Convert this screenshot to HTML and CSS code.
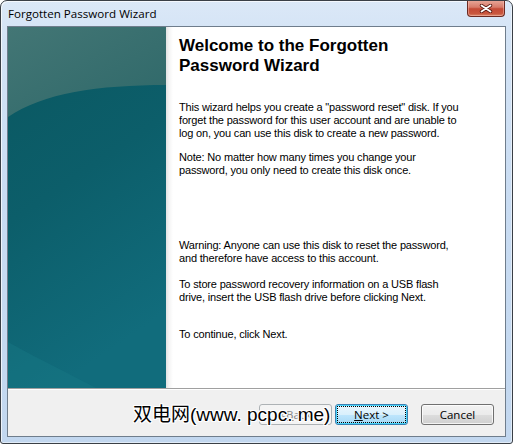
FILE: index.html
```html
<!DOCTYPE html>
<html>
<head>
<meta charset="utf-8">
<link rel="stylesheet" href="styles.css">
</head>
<body>
<div class="window">
  <div class="titlebar">
    <span class="title">Forgotten Password Wizard</span>
    <div class="close">
      <svg width="14" height="9" viewBox="0 0 14 9">
        <path d="M2.5 1.5 L11.5 7.5 M11.5 1.5 L2.5 7.5" stroke="#5a1a12" stroke-width="3.4" stroke-linecap="round"/>
        <path d="M2.5 1.5 L11.5 7.5 M11.5 1.5 L2.5 7.5" stroke="#ffffff" stroke-width="1.8" stroke-linecap="round"/>
      </svg>
    </div>
  </div>
  <div class="client">
    <div class="main">
      <div class="side">
        <svg width="158" height="361" viewBox="0 0 158 361" preserveAspectRatio="none">
          <defs>
            <linearGradient id="low" x1="0" y1="0" x2="0.3" y2="1">
              <stop offset="0" stop-color="#0a5760"/>
              <stop offset="0.5" stop-color="#0c5e6a"/>
              <stop offset="1" stop-color="#116c7c"/>
            </linearGradient>
            <linearGradient id="up" x1="0" y1="0" x2="1" y2="1">
              <stop offset="0" stop-color="#437675"/>
              <stop offset="1" stop-color="#2e6869"/>
            </linearGradient>
          </defs>
          <rect x="0" y="0" width="158" height="361" fill="url(#low)"/>
          <path d="M0 315 C30 332 60 346 88 361 L0 361 Z" fill="#1a7a86" opacity="0.4"/>
          <path d="M0 0 L158 0 L158 58 C90 58 35 66 0 90 Z" fill="url(#up)"/>
        </svg>
      </div>
      <div class="content">
        <h1 class="heading">Welcome to the Forgotten Password Wizard</h1>
        <p class="p1">This wizard helps you create a "password reset" disk. If you forget the password for this user account and are unable to log on, you can use this disk to create a new password.</p>
        <p class="p2">Note: No matter how many times you change your password, you only need to create this disk once.</p>
        <p class="p3">Warning: Anyone can use this disk to reset the password, and therefore have access to this account.</p>
        <p class="p4">To store password recovery information on a USB flash drive, insert the USB flash drive before clicking Next.</p>
        <p class="p5">To continue, click Next.</p>
      </div>
    </div>
    <div class="footer">
      <button class="btn disabled">&lt; <u>B</u>ack</button>
      <button class="btn default"><span class="focus"><u>N</u>ext &gt;</span></button>
      <button class="btn cancel">Cancel</button>
    </div>
  </div>
  <div class="watermark">双电网(www. pcpc. me)</div>
</div>
</body>
</html>
```

FILE: styles.css
```css
html, body {
  margin: 0;
  padding: 0;
  background: #ffffff;
}

.window {
  position: relative;
  box-sizing: border-box;
  width: 513px;
  height: 444px;
  border: 1px solid #3a3f46;
  border-radius: 7px 7px 3px 3px;
  background: linear-gradient(180deg, #dbe8f7 0px, #d3e3f5 40px, #c9dcf2 200px, #c2d7ef 444px);
  padding: 0 6px 6px 6px;
  display: flex;
  flex-direction: column;
  overflow: hidden;
  box-shadow: inset 1px 1px 0 rgba(255,255,255,0.7), inset -1px -1px 0 rgba(255,255,255,0.5);
}

.titlebar {
  height: 25px;
  display: flex;
  align-items: flex-start;
  justify-content: space-between;
  flex: none;
}

.title {
  font-family: "Open Sans", "Noto Sans", sans-serif;
  font-size: 11.6px;
  color: #000000;
  margin-top: 5px;
  margin-left: 1px;
}

.close {
  width: 36px;
  height: 16px;
  margin-top: -1px;
  margin-right: 1px;
  border: 1px solid #6b2a22;
  border-top: none;
  border-radius: 0 0 4px 4px;
  background: linear-gradient(180deg, #e9aa9b 0%, #d77b6a 45%, #c44a36 55%, #c9573e 85%, #d98a6c 100%);
  display: flex;
  align-items: center;
  justify-content: center;
  box-shadow: inset 0 0 0 1px rgba(255,200,190,0.45);
}

.client {
  flex: 1;
  border: 1px solid #6f7d8c;
  background: #f0f0f0;
  display: flex;
  flex-direction: column;
}

.main {
  height: 361px;
  display: flex;
  background: #ffffff;
  border-bottom: 1px solid #a0a0a0;
  flex: none;
}

.side {
  width: 158px;
  height: 361px;
  flex: none;
}

.side svg {
  display: block;
}

.content {
  flex: 1;
  padding: 9px 10px 0 13px;
  background: linear-gradient(90deg, #e2e2e2 0px, #f4f4f4 3px, #ffffff 7px);
  font-family: "Liberation Sans", Arial, sans-serif;
  font-size: 11px;
  line-height: 13px;
  letter-spacing: -0.17px;
  color: #000000;
}

.heading {
  margin: 0;
  font-family: "Liberation Sans", Arial, sans-serif;
  font-weight: bold;
  font-size: 17px;
  line-height: 20px;
  letter-spacing: 0;
  width: 260px;
}

.content p {
  margin: 0;
  width: 283px;
}

.content .p1 { margin-top: 25px; }
.content .p2 { margin-top: 11px; width: 260px; }
.content .p3 { margin-top: 62px; width: 278px; }
.content .p4 { margin-top: 13px; }
.content .p5 { margin-top: 24px; }

.footer {
  flex: 1;
  border-top: 1px solid #ffffff;
  display: flex;
  justify-content: flex-end;
  align-items: flex-start;
  padding: 14px 11px 0 0;
}

.btn {
  box-sizing: border-box;
  width: 73px;
  height: 21px;
  border: 1px solid #707070;
  border-radius: 3px;
  background: linear-gradient(180deg, #f2f2f2 0%, #ebebeb 50%, #dddddd 51%, #cfcfcf 100%);
  font-family: "Open Sans", "Noto Sans", sans-serif;
  font-size: 11.5px;
  color: #000000;
  padding: 0;
  display: flex;
  align-items: center;
  justify-content: center;
  box-shadow: inset 0 0 0 1px rgba(255,255,255,0.75);
}

.btn.disabled {
  border-color: #adb2b5;
  background: #f4f4f4;
  color: #838383;
  box-shadow: none;
}

.btn.default {
  margin-left: 3px;
  border-color: #3c7fb1;
  background: linear-gradient(180deg, #eaf6fd 0%, #d9f0fc 50%, #bee6fd 51%, #a7d9f5 100%);
  box-shadow: inset 0 0 0 1px #48d6fb;
}

.btn .focus {
  box-sizing: border-box;
  width: 67px;
  height: 15px;
  outline: 1px dotted #000000;
  display: flex;
  align-items: center;
  justify-content: center;
}

.btn.cancel {
  margin-left: 13px;
}

.watermark {
  position: absolute;
  left: 132px;
  top: 402px;
  font-family: "Liberation Sans", "Noto Sans CJK SC", sans-serif;
  font-size: 19px;
  line-height: 24px;
  color: #000000;
  white-space: nowrap;
  text-shadow: 1px 0 0 #fff, -1px 0 0 #fff, 0 1px 0 #fff, 0 -1px 0 #fff, 1px 1px 0 #fff, -1px -1px 0 #fff, 1px -1px 0 #fff, -1px 1px 0 #fff;
}
```
